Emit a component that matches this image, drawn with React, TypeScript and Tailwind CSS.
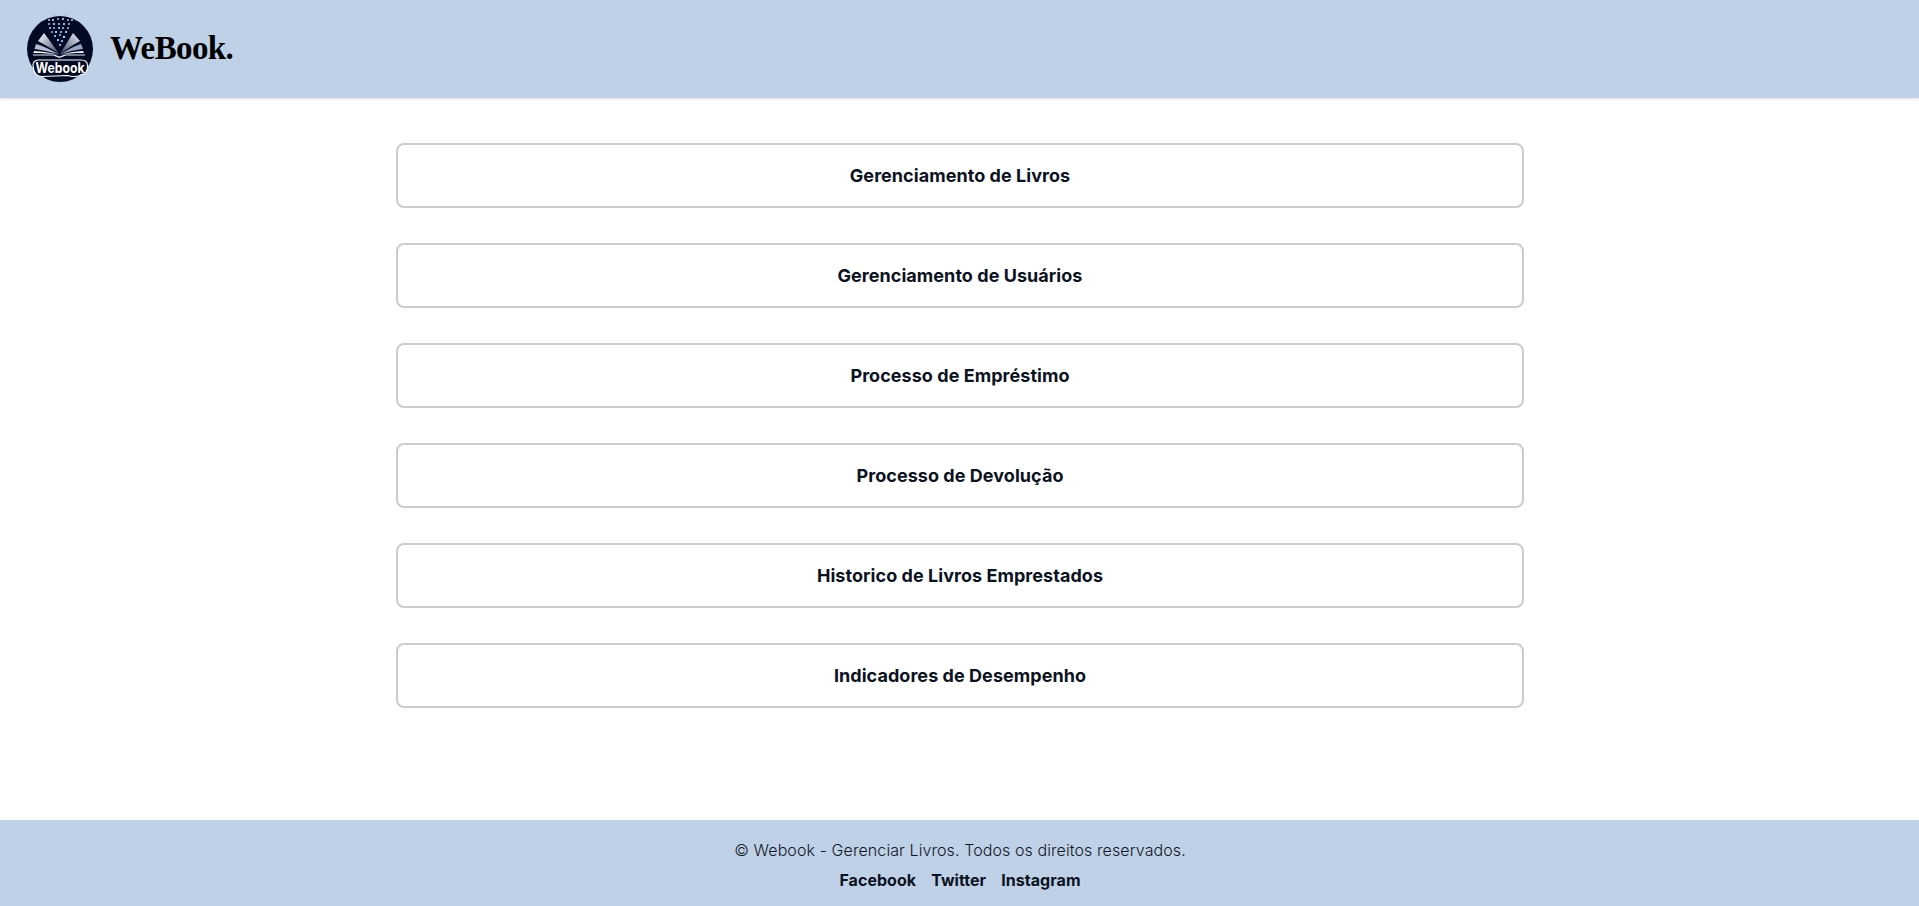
const items = [
  "Gerenciamento de Livros",
  "Gerenciamento de Usuários",
  "Processo de Empréstimo",
  "Processo de Devolução",
  "Historico de Livros Emprestados",
  "Indicadores de Desempenho",
];

function Logo() {
  const dots: [number, number, string][] = [
    [48, 17, "#8ea0bd"], [52, 17, "#9fb4d0"], [57, 16, "#7f95b8"], [62, 16, "#9fb4d0"], [67, 17, "#7f95b8"], [71, 17, "#8ea0bd"],
    [54, 12, "#9fc9ee"], [60, 11, "#cfe4f5"], [64, 12, "#9fc9ee"],
    [48, 21, "#7f95b8"], [53, 21, "#9fb4d0"], [58, 21, "#6aa7de"], [63, 21, "#9fb4d0"], [68, 21, "#7f95b8"],
    [49, 25, "#8ea0bd"], [53, 25, "#4f9fe0"], [58, 25, "#9fb4d0"], [62, 25, "#6aa7de"], [67, 25, "#7f95b8"],
    [51, 29, "#4f9fe0"], [55, 29, "#9fd0f5"], [60, 29, "#6aa7de"], [65, 29, "#8ec5ee"],
    [54, 33, "#6fb5ea"], [59, 32, "#4f9fe0"], [63, 34, "#b5d9f5"], [57, 37, "#8ec5ee"], [61, 38, "#6fb5ea"], [59, 42, "#6fb5ea"],
  ];
  return (
    <svg width="70" height="70" viewBox="25 12 70 70" className="shrink-0">
      <defs>
        <linearGradient id="l" x1="1" y1="1" x2="0" y2="0">
          <stop offset="0" stopColor="#3a4665" />
          <stop offset="1" stopColor="#ffffff" />
        </linearGradient>
        <linearGradient id="r" x1="0" y1="1" x2="1" y2="0">
          <stop offset="0" stopColor="#3a4665" />
          <stop offset="1" stopColor="#eef2f8" />
        </linearGradient>
      </defs>
      <circle cx="60" cy="47" r="33" fill="#030a24" />
      {dots.map(([x, y, c], i) => (
        <rect key={i} x={x} y={y} width="2" height="2" fill={c} />
      ))}
      <path d="M59 52 C55 46 50 39 44 31 L38 39 C45 43 53 47 59 52Z" fill="url(#l)" />
      <path d="M59 52.5 C51 48 43 44 36 42 L34.5 47 C43 48 52 50 59 52.5Z" fill="#b4bfd1" />
      <path d="M59 53 C51 50.5 42 49.5 34 49 L33.5 51 C43 51 52 51.5 59 53Z" fill="#f6f8fb" />
      <path d="M60 52 C64 46 68 39 73 31 L80 39 C73 43 66 47 60 52Z" fill="url(#r)" />
      <path d="M60 52.5 C67 48 75 44 81 42 L83 47 C74 48 66 50 60 52.5Z" fill="#97a4bb" />
      <path d="M60 53 C67 50.5 75 49.5 83 49 L84 51 C74 51 66 51.5 60 53Z" fill="#eef2f8" />
      <path d="M33 52.5 L54 52.5 L59.5 54.5 L65 52.5 L85 52.5 L85 53.5 L66 53.5 L59.5 56 L53 53.5 L33 53.5Z" fill="#dfe5ef" />
      <path d="M38 58 L81 58 C85 58 88 60 87.5 64 C88 69 85 72.5 81 72.5 C79 75 71 75 68 73.5 L42 74.5 C38 75 33.5 71 33.5 66 C32 61 34 58.5 38 58Z" fill="#030a24" stroke="#ffffff" strokeWidth="1.1" />
      <text x="35.5" y="71" textLength="49" lengthAdjust="spacingAndGlyphs" fill="#ffffff" className="font-['Inter',sans-serif] text-[14.5px] font-bold">
        Webook
      </text>
    </svg>
  );
}

export default function App() {
  return (
    <div className="flex h-[906px] flex-col bg-white font-['Inter',sans-serif] text-[#0b1221]">
      <header className="flex h-[98px] items-center gap-4 bg-[#bfd1e6] pl-[25px] shadow-[0_1px_3px_rgba(0,0,0,0.15)]">
        <Logo />
        <span className="-ml-[1px] font-['Liberation_Serif',serif] text-[33px] font-bold tracking-[-0.6px] text-black">WeBook.</span>
      </header>
      <main className="flex flex-1 flex-col items-center gap-[35px] pt-[45px]">
        {items.map((t) => (
          <div
            key={t}
            className="flex h-[65px] w-[1128px] items-center justify-center rounded-lg border-2 border-[#cccccc] bg-white pl-[1px] text-lg font-bold tracking-[0.05px]"
          >
            {t}
          </div>
        ))}
      </main>
      <footer className="flex h-[86px] flex-col items-center bg-[#bfd1e6] pt-[20px]">
        <p className="pl-[1px] text-base font-light leading-[20px] tracking-[0.09px] text-[#111827]">© Webook - Gerenciar Livros. Todos os direitos reservados.</p>
        <div className="mt-[10px] flex gap-[15px] pl-[1px] text-base font-bold leading-[20px] tracking-[0.05px]">
          <span>Facebook</span>
          <span>Twitter</span>
          <span>Instagram</span>
        </div>
      </footer>
    </div>
  );
}
